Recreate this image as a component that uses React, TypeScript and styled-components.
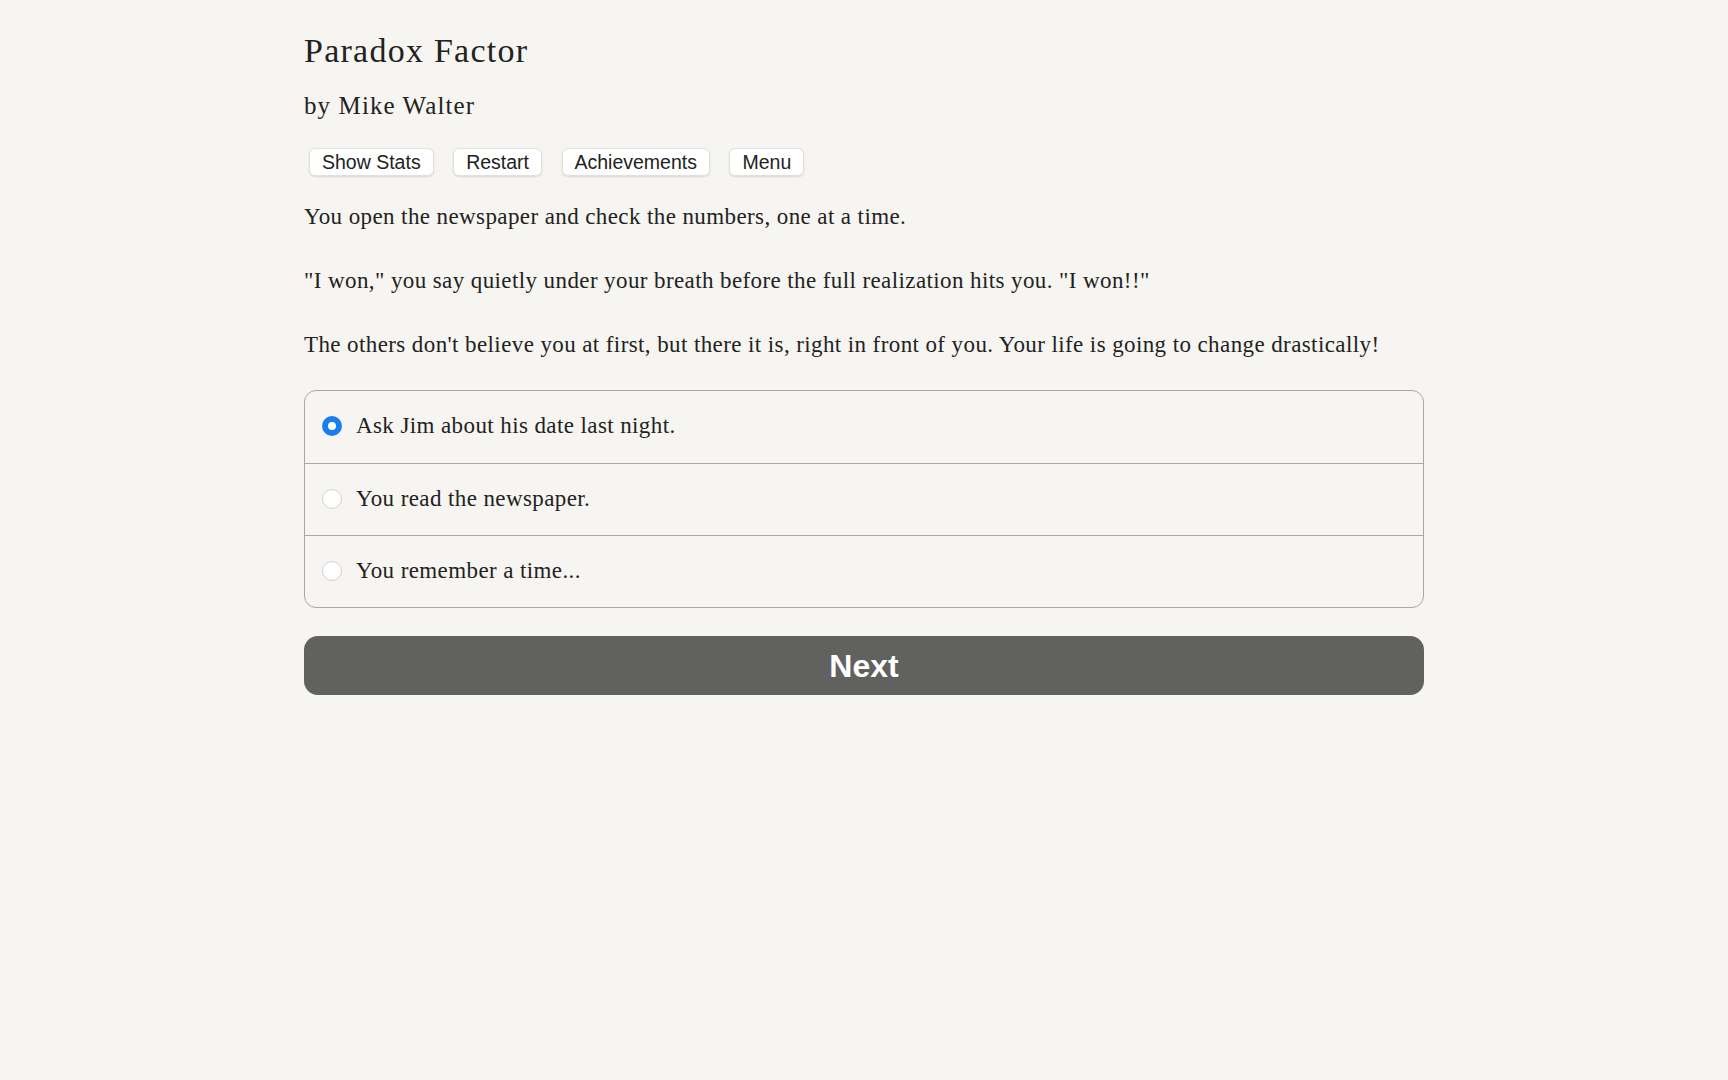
import React, { useState } from 'react'
import styled, { createGlobalStyle } from 'styled-components'

const GlobalStyle = createGlobalStyle`
  html, body {
    margin: 0;
    padding: 0;
    background-color: #f7f5f1;
  }
  body {
    font-family: 'Liberation Serif', 'Times New Roman', serif;
    color: #222;
    min-height: 100vh;
  }
`

const Page = styled.div`
  width: 1120px;
  margin: 0 auto;
  padding-top: 30px;
`

const Title = styled.h1`
  margin: 0;
  font-size: 34px;
  line-height: 42px;
  font-weight: normal;
  letter-spacing: 1.25px;
  color: #222;
`

const Author = styled.h2`
  margin: 18px 0 0;
  font-size: 25px;
  line-height: 32px;
  font-weight: normal;
  letter-spacing: 1.1px;
  color: #222;
`

const Toolbar = styled.div`
  display: flex;
  gap: 19.5px;
  margin-top: 26px;
  padding-left: 5px;
`

const ToolButton = styled.button`
  height: 28px;
  padding: 0 12px;
  font-family: 'Liberation Sans', Arial, sans-serif;
  font-size: 19.5px;
  color: #222;
  background-color: #fff;
  border: 1px solid #e2e0dc;
  border-radius: 6px;
  box-shadow: 0 1px 2px rgba(0, 0, 0, 0.12);
  cursor: pointer;
`

const Paragraph = styled.p`
  margin: 0;
  font-size: 23px;
  line-height: 32px;
  letter-spacing: 0.4px;
  & + & {
    margin-top: 32px;
  }
`

const Story = styled.div`
  margin-top: 25px;
`

const Choices = styled.div`
  margin-top: 29px;
  border: 1px solid #a9a8a6;
  border-radius: 12px;
  overflow: hidden;
`

const ChoiceRow = styled.label`
  display: flex;
  align-items: center;
  height: 72px;
  padding-left: 17px;
  padding-bottom: 2px;
  box-sizing: border-box;
  gap: 14px;
  font-size: 23px;
  letter-spacing: 0.4px;
  cursor: pointer;
  & + & {
    border-top: 1px solid #a9a8a6;
  }
`

const Radio = styled.span<{ $checked: boolean }>`
  box-sizing: border-box;
  width: 20px;
  height: 20px;
  border-radius: 50%;
  flex-shrink: 0;
  background-color: #fff;
  border: ${p => (p.$checked ? '6px solid #1a7ef3' : '1px solid #d4d2cf')};
`

const NextButton = styled.button`
  display: block;
  width: 100%;
  height: 59px;
  margin-top: 28px;
  border: none;
  border-radius: 14px;
  background-color: #616160;
  color: #fff;
  font-family: 'Liberation Sans', Arial, sans-serif;
  font-size: 32px;
  font-weight: bold;
  padding-top: 3px;
  cursor: pointer;
`

const choices = [
  'Ask Jim about his date last night.',
  'You read the newspaper.',
  'You remember a time...',
]

const App = () => {
  const [selected, setSelected] = useState(0)

  return (
    <>
      <GlobalStyle />
      <Page>
        <Title>Paradox Factor</Title>
        <Author>by Mike Walter</Author>
        <Toolbar>
          <ToolButton>Show Stats</ToolButton>
          <ToolButton>Restart</ToolButton>
          <ToolButton>Achievements</ToolButton>
          <ToolButton>Menu</ToolButton>
        </Toolbar>
        <Story>
          <Paragraph>You open the newspaper and check the numbers, one at a time.</Paragraph>
          <Paragraph>"I won," you say quietly under your breath before the full realization hits you. "I won!!"</Paragraph>
          <Paragraph>
            The others don't believe you at first, but there it is, right in front of you. Your life is going to change
            drastically!
          </Paragraph>
        </Story>
        <Choices>
          {choices.map((c, i) => (
            <ChoiceRow key={c} onClick={() => setSelected(i)}>
              <Radio $checked={selected === i} />
              {c}
            </ChoiceRow>
          ))}
        </Choices>
        <NextButton>Next</NextButton>
      </Page>
    </>
  )
}

export default App
